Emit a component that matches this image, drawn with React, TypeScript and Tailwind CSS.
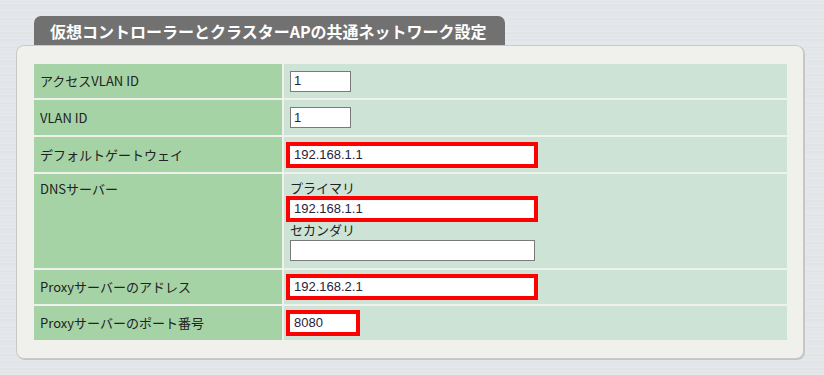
import React from 'react';

const rows = [
  { label: 'アクセスVLAN ID', kind: 'small', value: '1' },
  { label: 'VLAN ID', kind: 'small', value: '1' },
  { label: 'デフォルトゲートウェイ', kind: 'red', value: '192.168.1.1' },
  { label: 'DNSサーバー', kind: 'dns', value: '' },
  { label: 'Proxyサーバーのアドレス', kind: 'red', value: '192.168.2.1' },
  { label: 'Proxyサーバーのポート番号', kind: 'port', value: '8080' },
];

function PlainInput({ value, wide }: { value: string; wide?: boolean }) {
  return (
    <div
      className={
        (wide ? 'w-[245px] ' : 'w-[61px] ') +
        "h-[21px] ml-[6px] bg-white border border-[#7a7a7a] pl-[3px] flex items-center text-[13px] text-[#1f2340] font-['Liberation_Sans',Arial,sans-serif]"
      }
    >
      {value}
    </div>
  );
}

function RedInput({ value, narrow }: { value: string; narrow?: boolean }) {
  return (
    <div
      className={
        (narrow ? 'w-[74px] ' : 'w-[252px] ') +
        "h-[26px] ml-[2px] bg-white border-[4px] border-[#ff0000] pl-[4px] flex items-center text-[13px] text-[#1f2340] font-['Liberation_Sans',Arial,sans-serif]"
      }
    >
      {value}
    </div>
  );
}

export default function App() {
  return (
    <div className="h-[375px] w-full overflow-hidden bg-[repeating-linear-gradient(180deg,#e4e7eb_0px,#e1e4e8_2px,#e8eaed_3px,#dfe2e6_5px,#e5e8eb_7px)] pt-[16px] pl-[16px] font-['Noto_Sans_CJK_JP','Noto_Sans',sans-serif]">
      {/* Section tab */}
      <div className="ml-[18px] w-[471px] h-[29px] rounded-t-[7px] bg-[#717171] pl-[16px] flex items-center text-white font-bold text-[16px] leading-none">
        仮想コントローラーとクラスターAPの共通ネットワーク設定
      </div>

      {/* Panel */}
      <div className="w-[788px] h-[314px] rounded-[8px] bg-[#f0f1ec] border border-[#c9c9c9] shadow-[1px_1px_0_#c4c4c4] pl-[17px] pt-[18px]">
        <div className="w-[753px] grid grid-cols-[248px_503px] grid-rows-[34px_35px_35px_94px_34px_34px] gap-[2px] text-[13px] text-[#222]">
          {rows.map((row) => (
            <React.Fragment key={row.label}>
              <div
                className={
                  'bg-[#a5d3a5] pl-[6px] flex ' +
                  (row.kind === 'dns' ? 'items-start pt-[5px]' : 'items-center')
                }
              >
                {row.label}
              </div>
              <div
                className={
                  'bg-[#cde3d6] flex ' +
                  (row.kind === 'dns' ? 'flex-col pt-[6px]' : 'items-center')
                }
              >
                {row.kind === 'small' && <PlainInput value={row.value} />}
                {row.kind === 'red' && <RedInput value={row.value} />}
                {row.kind === 'port' && <RedInput value={row.value} narrow />}
                {row.kind === 'dns' && (
                  <>
                    <div className="ml-[6px] h-[16px] leading-[16px]">プライマリ</div>
                    <RedInput value="192.168.1.1" />
                    <div className="ml-[6px] h-[16px] leading-[16px]">セカンダリ</div>
                    <div className="mt-[2px]">
                      <PlainInput value="" wide />
                    </div>
                  </>
                )}
              </div>
            </React.Fragment>
          ))}
        </div>
      </div>
    </div>
  );
}
